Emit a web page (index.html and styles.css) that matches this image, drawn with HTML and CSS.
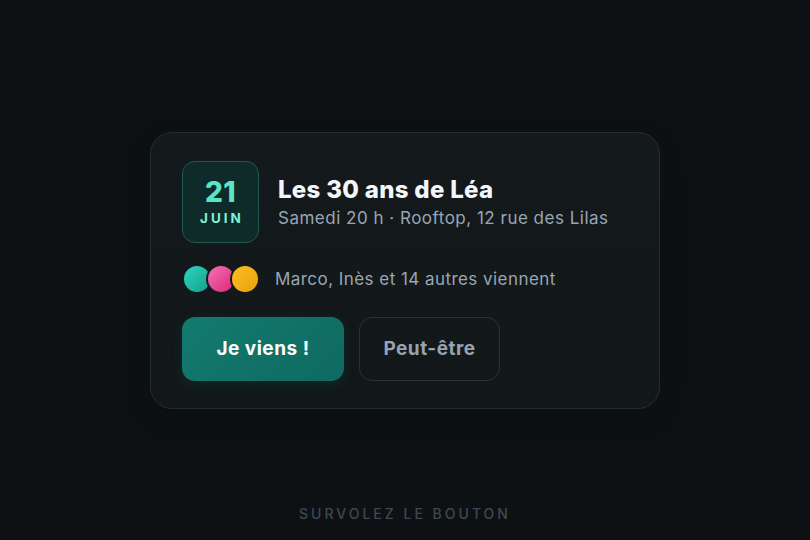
FILE: index.html
```html
<!DOCTYPE html>
<html lang="fr">

<head>
    <meta charset="UTF-8">
    <title>Les 30 ans de Léa</title>
    <link rel="stylesheet" href="styles.css">
</head>

<body>
    <div class="spacer"></div>

    <div class="card">
        <div class="event-head">
            <div class="date-box">
                <span class="day">21</span>
                <span class="month">JUIN</span>
            </div>
            <div class="event-info">
                <h1>Les 30 ans de Léa</h1>
                <p>Samedi 20 h · Rooftop, 12 rue des Lilas</p>
            </div>
        </div>

        <div class="guests">
            <div class="avatars">
                <span class="avatar teal"></span>
                <span class="avatar pink"></span>
                <span class="avatar gold"></span>
            </div>
            <span class="guest-text">Marco, Inès et 14 autres viennent</span>
        </div>

        <div class="actions">
            <button class="btn btn-primary">Je viens !</button>
            <button class="btn btn-ghost">Peut-être</button>
        </div>
    </div>

    <div class="hint">SURVOLEZ LE BOUTON</div>
</body>

</html>
```

FILE: styles.css
```css
* {
    box-sizing: border-box;
}

html,
body {
    height: 100%;
}

body {
    margin: 0;
    background-color: #0e1114;
    font-family: "Inter", "Liberation Sans", sans-serif;
    display: grid;
    grid-template-rows: 1fr auto 1fr;
    justify-items: center;
}

.card {
    width: 510px;
    background: linear-gradient(180deg, #141a1c 0%, #121819 100%);
    border: 1px solid #252c2f;
    border-radius: 22px;
    padding: 28px 31px 27px;
    box-shadow: 0 10px 30px rgba(0, 0, 0, 0.15);
}

.event-head {
    display: flex;
    align-items: center;
    gap: 19px;
}

.date-box {
    width: 77px;
    height: 82px;
    border-radius: 13px;
    background-color: #0f2b29;
    border: 1px solid #1d5a50;
    display: flex;
    flex-direction: column;
    align-items: center;
    justify-content: center;
    color: #5de4c7;
}

.date-box .day {
    font-size: 28px;
    font-weight: 800;
    line-height: 30px;
    letter-spacing: 0.5px;
}

.date-box .month {
    font-size: 13.5px;
    font-weight: 700;
    letter-spacing: 3px;
    margin-top: 3px;
    margin-left: 3px;
    color: #7ff0d6;
}

.event-info h1 {
    margin: 0;
    font-size: 24px;
    font-weight: 800;
    color: #f4f6f8;
    line-height: 28px;
    letter-spacing: 0.3px;
}

.event-info p {
    margin: 4px 0 0;
    font-size: 17px;
    letter-spacing: 0.5px;
    color: #9aa6b4;
}

.guests {
    display: flex;
    align-items: center;
    gap: 15px;
    margin-top: 21px;
}

.avatars {
    display: flex;
}

.avatar {
    width: 30px;
    height: 30px;
    border-radius: 50%;
    border: 2px solid #131a1c;
}

.avatar + .avatar {
    margin-left: -6px;
}

.teal {
    background: linear-gradient(135deg, #2dd4bf, #14a08c);
}

.pink {
    background: linear-gradient(135deg, #f472b6, #db2777);
}

.gold {
    background: linear-gradient(135deg, #fbbf24, #eaa00b);
}

.guest-text {
    font-size: 17px;
    letter-spacing: 0.45px;
    color: #9aa6b4;
}

.actions {
    display: flex;
    gap: 15px;
    margin-top: 23px;
}

.btn {
    height: 64px;
    border-radius: 13px;
    font-family: "Inter", "Liberation Sans", sans-serif;
    font-size: 19px;
    font-weight: 700;
    letter-spacing: 0.5px;
    cursor: pointer;
}

.btn-primary {
    width: 162px;
    border: none;
    color: #ffffff;
    background: linear-gradient(135deg, #137a6f 0%, #0f6a60 100%);
    box-shadow: 0 4px 12px rgba(15, 118, 110, 0.15);
}

.btn-primary:hover {
    background: linear-gradient(135deg, #179083 0%, #117a6f 100%);
}

.btn-ghost {
    width: 141px;
    background: transparent;
    border: 1px solid #2a3236;
    color: #97a3b1;
}

.hint {
    align-self: end;
    padding-bottom: 18px;
    font-size: 14px;
    font-weight: 500;
    letter-spacing: 3px;
    color: #3e4851;
}
```
